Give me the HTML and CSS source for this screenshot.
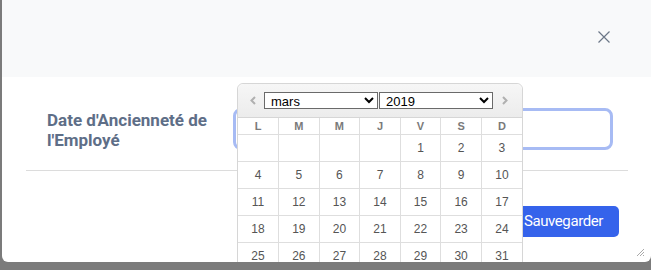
FILE: index.html
```html
<!DOCTYPE html>
<html lang="fr">
<head>
    <meta charset="UTF-8">
    <meta name="viewport" content="width=device-width, initial-scale=1.0">
    <title>Date d'Ancienneté</title>
    <link rel="stylesheet" href="styles.css">
</head>
<body>
    <div class="modal">
        <div class="modal-header">
            <button class="close-btn" aria-label="Fermer">
                <svg width="12" height="12" viewBox="0 0 12 12"><path d="M0.5 0.5 L11.5 11.5 M11.5 0.5 L0.5 11.5" stroke="#6b7787" stroke-width="1.2" fill="none"/></svg>
            </button>
        </div>
        <div class="modal-body">
            <div class="form-row">
                <label for="seniority">Date d'Ancienneté de l'Employé</label>
                <input type="text" id="seniority" class="date-input">
            </div>
            <hr class="divider">
            <div class="modal-footer">
                <button class="save-btn">Sauvegarder</button>
            </div>
        </div>
        <span class="grip">
            <svg width="9" height="9" viewBox="0 0 9 9"><path d="M8 1 L1 8 M8 4 L4 8 M8 7 L7 8" stroke="#aaa" stroke-width="1" fill="none"/></svg>
        </span>

        <div class="datepicker">
            <div class="dp-header">
                <span class="dp-nav">
                    <svg width="6" height="9" viewBox="0 0 6 9"><path d="M5 1 L1.5 4.5 L5 8" stroke="#b0b0b0" stroke-width="2" fill="none"/></svg>
                </span>
                <select class="dp-select">
                    <option>janv.</option>
                    <option>févr.</option>
                    <option selected>mars</option>
                    <option>avr.</option>
                </select>
                <select class="dp-select">
                    <option>2018</option>
                    <option selected>2019</option>
                    <option>2020</option>
                </select>
                <span class="dp-nav">
                    <svg width="6" height="9" viewBox="0 0 6 9"><path d="M1 1 L4.5 4.5 L1 8" stroke="#b0b0b0" stroke-width="2" fill="none"/></svg>
                </span>
            </div>
            <table class="dp-table">
                <thead>
                    <tr><th>L</th><th>M</th><th>M</th><th>J</th><th>V</th><th>S</th><th>D</th></tr>
                </thead>
                <tbody id="dp-days"></tbody>
            </table>
        </div>
    </div>

    <script>
        // mars 2019 starts on a Friday (Monday-first week)
        const body = document.getElementById("dp-days");
        let day = 1 - 4;
        for (let w = 0; w < 5; w++) {
            const tr = document.createElement("tr");
            for (let d = 0; d < 7; d++) {
                const td = document.createElement("td");
                if (day >= 1 && day <= 31) td.textContent = day;
                tr.appendChild(td);
                day++;
            }
            body.appendChild(tr);
        }
    </script>
</body>
</html>
```

FILE: styles.css
```css
body {
    margin: 0;
    background: #7b7b7b;
    font-family: Roboto, "Liberation Sans", Arial, sans-serif;
    overflow: hidden;
}

.modal {
    position: relative;
    margin-left: 2px;
    width: 649px;
    height: 262px;
    background: #fff;
    border-radius: 0 0 6px 6px;
}

.modal-header {
    height: 77px;
    background: #f8f9fa;
    display: flex;
    align-items: center;
    justify-content: flex-end;
    padding-right: 41px;
    padding-bottom: 4px;
    box-sizing: border-box;
}

.close-btn {
    border: none;
    background: none;
    padding: 0;
    width: 12px;
    height: 12px;
    display: flex;
}

.modal-body {
    padding: 0 23px 0 24px;
}

.form-row {
    display: flex;
    align-items: flex-start;
    padding: 31px 0 0 21px;
}

    .form-row label {
        width: 186px;
        padding-top: 2px;
        font-size: 17px;
        font-weight: bold;
        line-height: 20px;
        color: #5e6e87;
    }

.date-input {
    width: 380px;
    height: 42px;
    box-sizing: border-box;
    border: 3px solid #a7bbf4;
    border-radius: 8px;
    outline: none;
}

.divider {
    margin: 20px 0 0 0;
    border: none;
    border-top: 1px solid #dcdcdc;
}

.modal-footer {
    display: flex;
    justify-content: flex-end;
    padding: 35px 9px 0 0;
}

.save-btn {
    height: 31px;
    padding: 0 16px 1px 16px;
    background: #3563eb;
    color: #fff;
    border: none;
    border-radius: 5px;
    font-family: Roboto, sans-serif;
    font-size: 15px;
    letter-spacing: -0.4px;
}

.grip {
    position: absolute;
    right: 6px;
    bottom: 5px;
    display: flex;
}

/* datepicker popup */
.datepicker {
    position: absolute;
    left: 235px;
    top: 83px;
    width: 286px;
    background: #fff;
    border: 1px solid #d6d6d6;
    border-radius: 6px 6px 0 0;
    font-family: "Liberation Sans", Arial, sans-serif;
    box-sizing: border-box;
    z-index: 2;
}

.dp-header {
    height: 34px;
    box-sizing: border-box;
    display: flex;
    align-items: center;
    padding: 0 11px 0 12px;
    background: linear-gradient(#f6f6f6, #ececec);
    border-bottom: 1px solid #d6d6d6;
    border-radius: 6px 6px 0 0;
}

.dp-nav {
    display: flex;
    width: 14px;
}

    .dp-nav:last-child {
        justify-content: flex-end;
    }

.dp-select {
    width: 114px;
    height: 17px;
    margin-right: 1px;
    padding: 0 2px;
    border: 1px solid #6a6a6a;
    border-radius: 0;
    background: #fff;
    font-family: "Liberation Sans", Arial, sans-serif;
    font-size: 13px;
    color: #000;
}

.dp-table {
    width: 100%;
    border-collapse: collapse;
    table-layout: fixed;
}

    .dp-table th {
        height: 16px;
        padding: 0;
        font-size: 11px;
        font-weight: bold;
        color: #7a7a7a;
        border: 1px solid #dedede;
        border-top: none;
    }

    .dp-table td {
        height: 26px;
        padding: 0;
        text-align: center;
        font-size: 12px;
        color: #555;
        border: 1px solid #dedede;
    }

    .dp-table th:first-child, .dp-table td:first-child {
        border-left: none;
    }

    .dp-table th:last-child, .dp-table td:last-child {
        border-right: none;
    }
```
